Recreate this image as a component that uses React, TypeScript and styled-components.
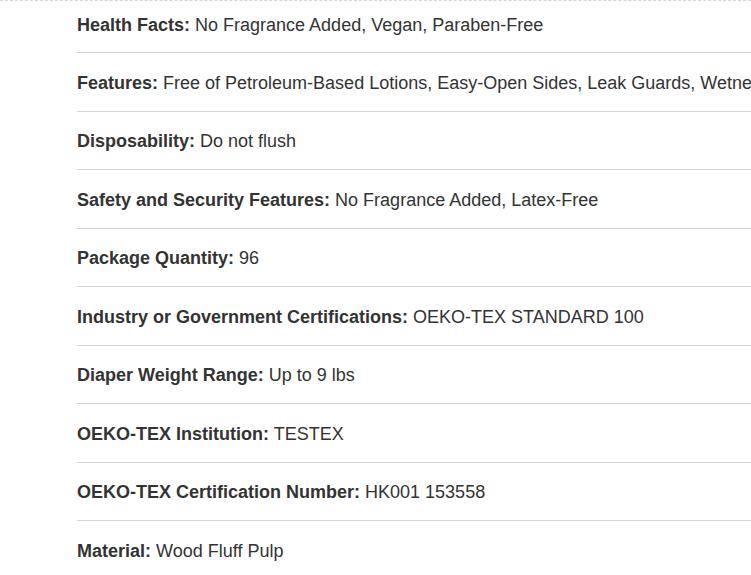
import React from "react";
import styled, { createGlobalStyle } from "styled-components";

const Global = createGlobalStyle`
  html, body { margin: 0; padding: 0; background: #fff; overflow: hidden; }
  body { font-family: "Liberation Sans", Arial, Helvetica, sans-serif; }
`;

const Page = styled.div`
  width: 751px;
  height: 575px;
  overflow: hidden;
  border-top: 1px dashed #d4d4d4;
`;

const List = styled.ul`
  list-style: none;
  margin: 0;
  padding: 0 0 0 77px;
  width: 900px;
`;

const Row = styled.li<{ $first?: boolean; $last?: boolean }>`
  padding: ${(p) => (p.$first ? "11.5px 0 14px" : "17.5px 0 14.5px")};
  border-bottom: ${(p) => (p.$last ? "none" : "1px solid #d6d6d6")};
  font-size: 18px;
  line-height: 25.5px;
  color: #333;
  white-space: nowrap;
`;

const Label = styled.strong`
  font-weight: 700;
  color: #333;
`;

const specs: [string, string][] = [
  ["Health Facts:", "No Fragrance Added, Vegan, Paraben-Free"],
  ["Features:", "Free of Petroleum-Based Lotions, Easy-Open Sides, Leak Guards, Wetness Indicator"],
  ["Disposability:", "Do not flush"],
  ["Safety and Security Features:", "No Fragrance Added, Latex-Free"],
  ["Package Quantity:", "96"],
  ["Industry or Government Certifications:", "OEKO-TEX STANDARD 100"],
  ["Diaper Weight Range:", "Up to 9 lbs"],
  ["OEKO-TEX Institution:", "TESTEX"],
  ["OEKO-TEX Certification Number:", "HK001 153558"],
  ["Material:", "Wood Fluff Pulp"],
];

export default function App() {
  return (
    <Page>
      <Global />
      <List>
        {specs.map(([k, v], i) => (
          <Row key={k} $first={i === 0} $last={i === specs.length - 1}>
            <Label>{k}</Label> {v}
          </Row>
        ))}
      </List>
    </Page>
  );
}
